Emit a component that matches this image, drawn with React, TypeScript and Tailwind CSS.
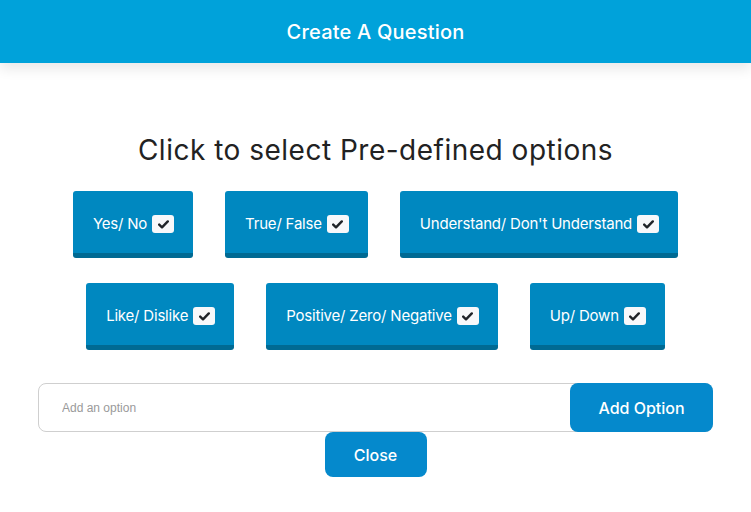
const rows = [
  ['Yes/ No', 'True/ False', "Understand/ Don't Understand"],
  ['Like/ Dislike', 'Positive/ Zero/ Negative', 'Up/ Down'],
];

function Check() {
  return (
    <span className="ml-[5px] inline-flex h-[18px] w-[22px] items-center justify-center rounded-[3px] bg-[#f7f8fa]">
      <svg width="11" height="9" viewBox="0 0 11 9">
        <path d="M1.2 4.6 L4 7.3 L9.8 1.4" fill="none" stroke="#1f2328" strokeWidth="2.4" strokeLinecap="round" strokeLinejoin="round" />
      </svg>
    </span>
  );
}

export default function App() {
  return (
    <div className="h-[512px] w-[751px] overflow-hidden bg-white font-['Inter',sans-serif]">
      <div className="relative z-10 flex h-[63px] items-center justify-center bg-[#00a2da] shadow-[0_6px_12px_rgba(0,0,0,0.09)]">
        <h1 className="text-[20px] font-medium tracking-[0.2px] text-white">Create A Question</h1>
      </div>

      <div className="flex flex-col items-center pt-[70px]">
        <h2 className="text-[28px] leading-[34px] tracking-[0.5px] text-[#222]">Click to select Pre-defined options</h2>

        <div className="mt-[24px] flex flex-col items-center gap-[25px]">
          {rows.map((row, i) => (
            <div key={i} className="flex gap-[32px]">
              {row.map((label) => (
                <button
                  key={label}
                  className="flex h-[67px] items-center rounded-[3px] border-b-[5px] border-[#006a93] bg-[#0088c0] pl-[20px] pr-[19px] pt-[4px] text-[15px] tracking-[-0.2px] text-white"
                >
                  <span>{label}</span>
                  <Check />
                </button>
              ))}
            </div>
          ))}
        </div>
      </div>

      <div className="mx-[38px] mt-[33px] flex h-[49px] items-stretch rounded-[8px] border border-[#cfcfcf]">
        <input
          placeholder="Add an option"
          className="flex-1 bg-transparent pl-[23px] font-['Liberation_Sans',sans-serif] text-[12px] text-[#333] outline-none placeholder:text-[#9a9a9a]"
        />
        <button className="-my-px -mr-px w-[143px] rounded-[8px] bg-[#0589cc] text-[16px] font-medium text-white">
          Add Option
        </button>
      </div>

      <div className="flex justify-center">
        <button className="h-[45px] w-[102px] rounded-[8px] bg-[#0589cc] text-[16px] font-medium text-white">
          Close
        </button>
      </div>
    </div>
  );
}
